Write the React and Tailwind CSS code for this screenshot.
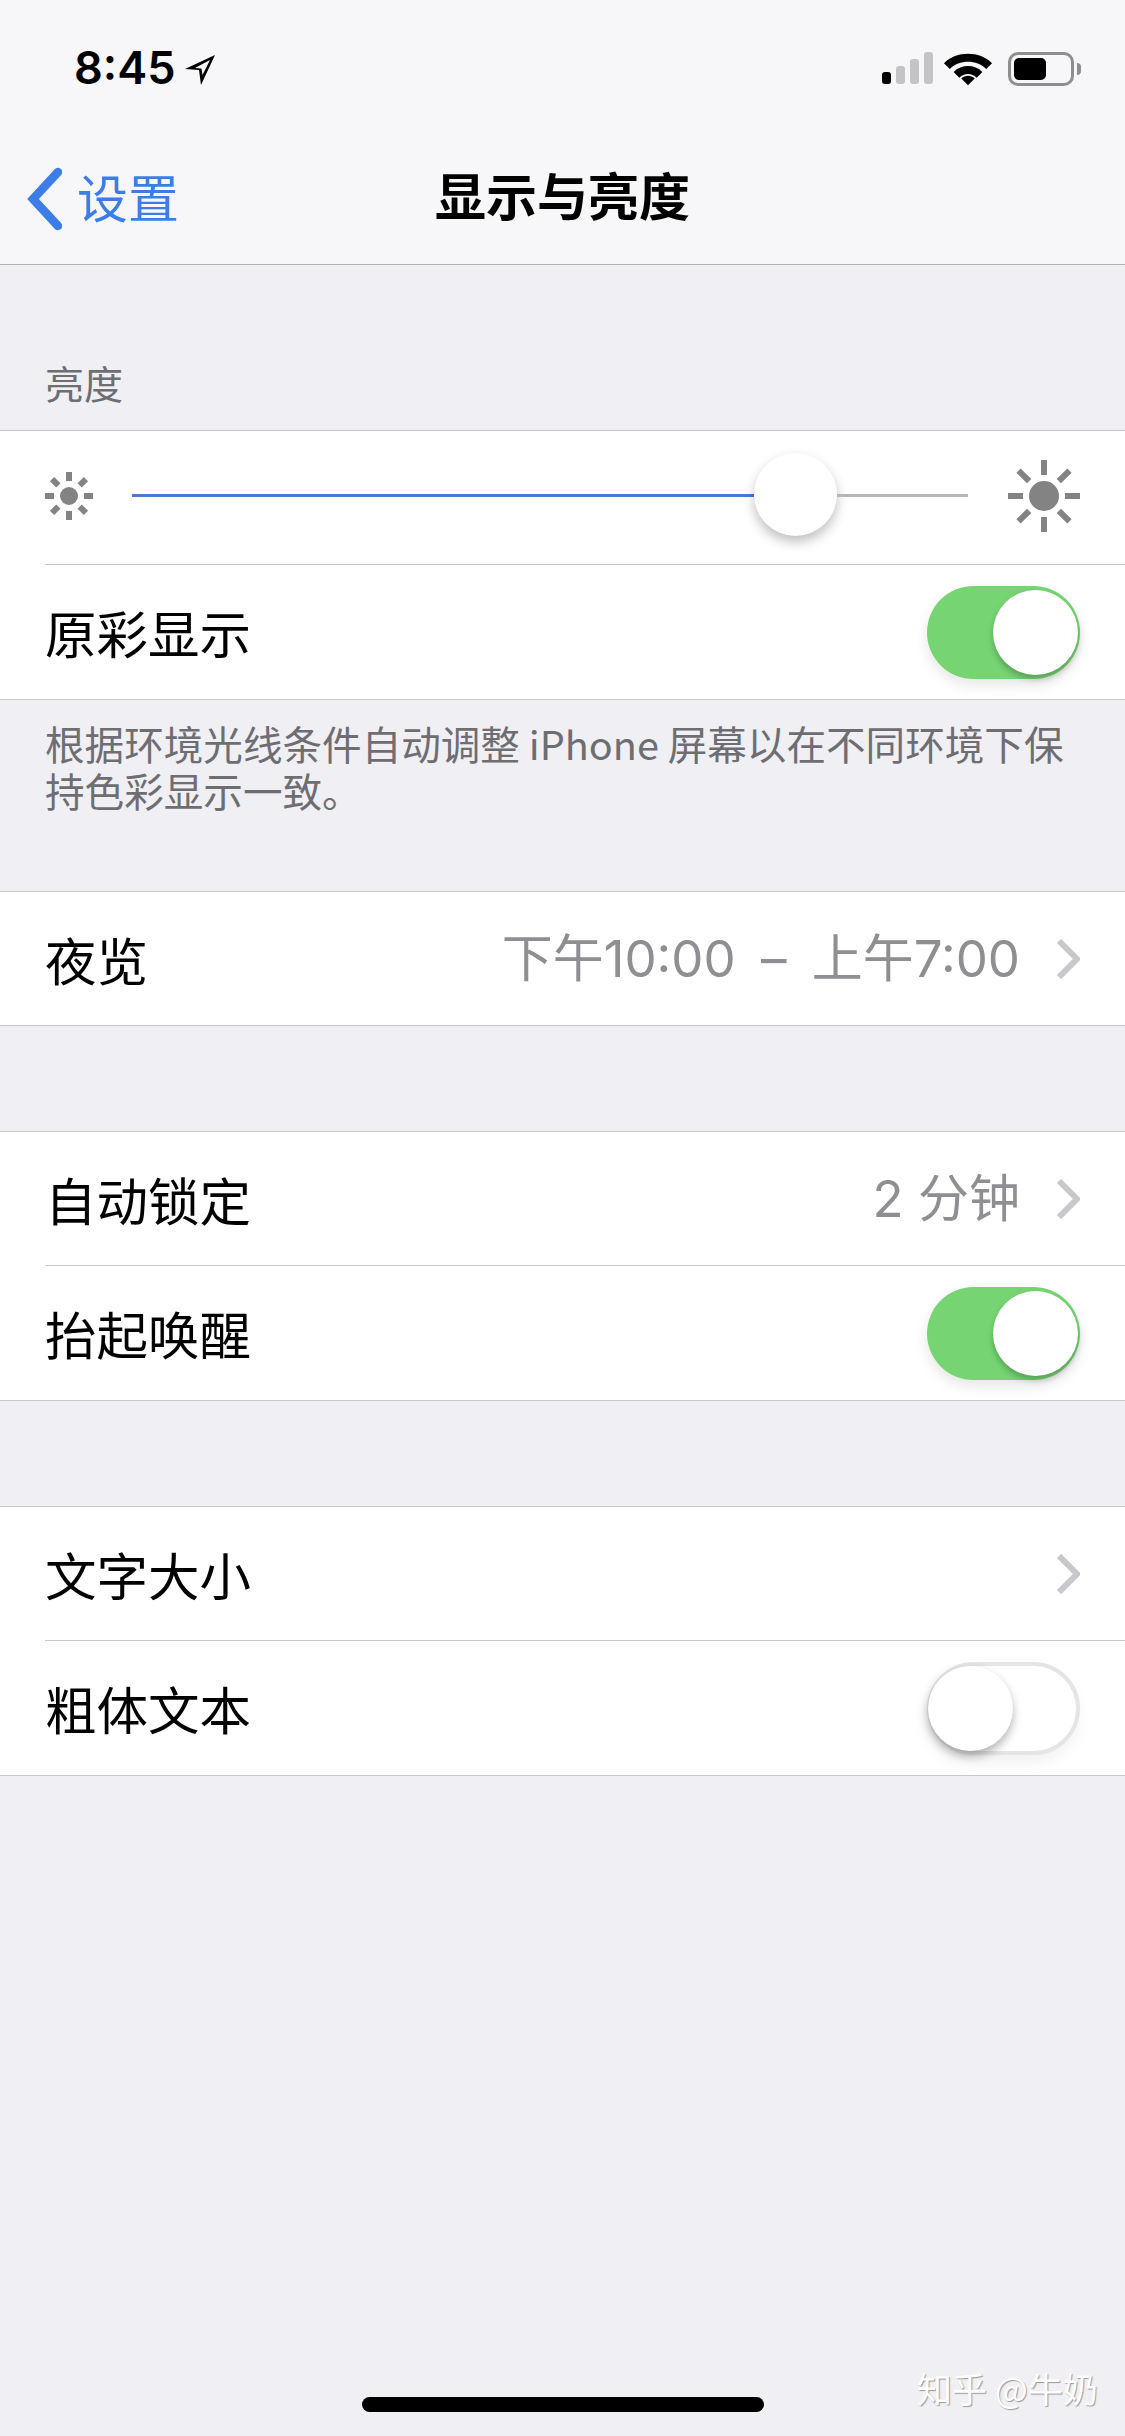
const cjk = "font-['Noto_Sans_CJK_SC','Inter',sans-serif]"

function Chevron() {
  return (
    <svg width="24" height="40" viewBox="0 0 24 40" className="shrink-0">
      <path d="M3 2 L21 20 L3 38" fill="none" stroke="#c7c7cc" strokeWidth="6" />
    </svg>
  )
}

function Toggle({ on }) {
  if (on) {
    return (
      <div className="w-[153px] h-[93px] rounded-full bg-[#76d572] flex items-center justify-end pr-[2px] shadow-[0_6px_14px_rgba(0,0,0,0.1)]">
        <div className="w-[85px] h-[85px] rounded-full bg-white shadow-[0_4px_6px_rgba(0,0,0,0.25)]" />
      </div>
    )
  }
  return (
    <div className="w-[153px] h-[93px] rounded-full bg-white border-[4px] border-[#e5e5e5] flex items-center justify-start shadow-[-2px_8px_16px_rgba(0,0,0,0.06)]">
      <div className="-ml-[3px] w-[85px] h-[85px] rounded-full bg-white shadow-[0_5px_10px_rgba(0,0,0,0.3)]" />
    </div>
  )
}

function Sun({ size, r, ray, rayW }) {
  const c = size / 2
  const angles = [0, 45, 90, 135, 180, 225, 270, 315]
  return (
    <svg width={size} height={size} viewBox={`0 0 ${size} ${size}`} className="shrink-0">
      <circle cx={c} cy={c} r={r} fill="#838383" />
      {angles.map((a) => (
        <rect
          key={a}
          x={c - rayW / 2}
          y={0}
          width={rayW}
          height={ray}
          fill="#838383"
          transform={`rotate(${a} ${c} ${c})`}
        />
      ))}
    </svg>
  )
}

function Row({ label, last, short, children }) {
  return (
    <div className={`ml-[45px] pr-[45px] ${short ? 'h-[133px]' : 'h-[134px]'} flex items-center justify-between ${last ? '' : 'border-b border-[#c8c7cc]'}`}>
      <span className="text-[51.5px] leading-none text-black">{label}</span>
      {children}
    </div>
  )
}

function Value({ children }) {
  return (
    <div className="flex items-center gap-[36px]">
      <span className="font-['Inter','Noto_Sans_CJK_SC',sans-serif] text-[51px] leading-none text-[#8e8e93]">{children}</span>
      <Chevron />
    </div>
  )
}

function Section({ children }) {
  return <div className="bg-white border-y border-[#c8c7cc]">{children}</div>
}

export default function App() {
  return (
    <div className={`relative w-[1125px] h-[2436px] bg-[#efeff4] overflow-hidden ${cjk}`}>
      <div className="h-[265px] bg-[#f7f7f9] border-b border-[#b2b2b2] flex flex-col">
        {/* status bar */}
        <div className="h-[140px] flex items-start justify-between pt-[46px] pl-[74px] pr-[44px]">
          <div className="flex items-center gap-[9px]">
            <span className="font-['Inter',sans-serif] text-[45px] leading-[44px] font-semibold text-black">8:45</span>
            <svg width="32" height="32" viewBox="0 0 32 32" className="mt-[3px]">
              <path d="M31 1 L1 15 L15 16 L17 31 Z" fill="#000" />
              <path d="M26 6 L11 14 L17.5 14.5 L18.5 21 Z" fill="#f7f7f9" />
            </svg>
          </div>
          <div className="flex items-center gap-[10px] pt-[6px]">
            <svg width="52" height="34" viewBox="0 0 52 34">
              <rect x="1" y="20" width="9" height="12" rx="3" fill="#000" />
              <rect x="15" y="14" width="9" height="18" rx="3" fill="#c4c4c4" />
              <rect x="29" y="7" width="9" height="25" rx="3" fill="#c4c4c4" />
              <rect x="43" y="0" width="9" height="32" rx="3" fill="#c4c4c4" />
            </svg>
            <svg width="50" height="34" viewBox="0 0 52 34">
              <path d="M1 11 C14 -2 38 -2 51 11 L45 17 C35 7 17 7 7 17 Z" fill="#000" />
              <path d="M11 21 C19 13 33 13 41 21 L35 27 C30 22 22 22 17 27 Z" fill="#000" transform="translate(0 -1)" />
              <path d="M19 27 C23 23 29 23 33 27 L26 34 Z" fill="#000" />
            </svg>
            <div className="flex items-center gap-[3px] ml-[5px]">
              <div className="w-[66px] h-[34px] rounded-[10px] border-[3px] border-[#8e8e8e] p-[3px]">
                <div className="w-[32px] h-full rounded-[5px] bg-black" />
              </div>
              <div className="w-[4px] h-[12px] rounded-r-full bg-[#8e8e8e]" />
            </div>
          </div>
        </div>
        {/* nav bar */}
        <div className="relative flex-1 flex items-center justify-center pb-[16px]">
          <div className="absolute left-[26px] top-[27px] flex items-center gap-[15px] text-[#3d7de8]">
            <svg width="36" height="64" viewBox="0 0 36 64">
              <path d="M32 5 L7 32 L32 59" fill="none" stroke="#3d7de8" strokeWidth="8.5" strokeLinecap="round" />
            </svg>
            <span className="text-[51px] leading-none mb-[6px]">设置</span>
          </div>
          <span className="text-[51px] leading-none font-semibold text-black">显示与亮度</span>
        </div>
      </div>

      <div className="h-[165px] flex items-end pl-[45px] pb-[28px]">
        <span className="text-[39px] leading-none text-[#6d6d72]">亮度</span>
      </div>

      <Section>
        <div className="ml-[45px] pr-[45px] pb-[4px] h-[134px] flex items-center border-b border-[#c8c7cc]">
          <Sun size={48} r={9} ray={9} rayW={6} />
          <div className="ml-[39px] flex-1 flex items-center">
            <div className="w-[622px] h-[3px] bg-[#4a7bd0]" />
            <div className="w-[83px] h-[83px] mb-[3px] rounded-full bg-white shrink-0 shadow-[0_6px_12px_rgba(0,0,0,0.25)]" />
            <div className="w-[131px] h-[3px] bg-[#b6b6b6]" />
          </div>
          <Sun size={72} r={15} ray={15} rayW={6} />
        </div>
        <Row label="原彩显示" last>
          <Toggle on />
        </Row>
      </Section>

      <div className="h-[191px] pl-[45px] pr-[30px] pt-[19px] text-[39.6px] leading-[47px] text-[#6d6d72]">
        根据环境光线条件自动调整 iPhone 屏幕以在不同环境下保持色彩显示一致。
      </div>

      <Section>
        <Row label="夜览" last short>
          <Value>
            下午10:00<span className="mx-[11px]"> – </span>上午7:00
          </Value>
        </Row>
      </Section>

      <div className="h-[105px]" />

      <Section>
        <Row label="自动锁定">
          <Value>2 分钟</Value>
        </Row>
        <Row label="抬起唤醒" last>
          <Toggle on />
        </Row>
      </Section>

      <div className="h-[105px]" />

      <Section>
        <Row label="文字大小">
          <Chevron />
        </Row>
        <Row label="粗体文本" last>
          <Toggle />
        </Row>
      </Section>

      <div className="absolute left-[362px] top-[2397px] w-[402px] h-[15px] rounded-full bg-black" />
      <span className="absolute left-[917px] top-[2366px] text-[35px] leading-[44px] text-white [text-shadow:1px_1px_1px_#999]">知乎 @牛奶</span>
    </div>
  )
}
